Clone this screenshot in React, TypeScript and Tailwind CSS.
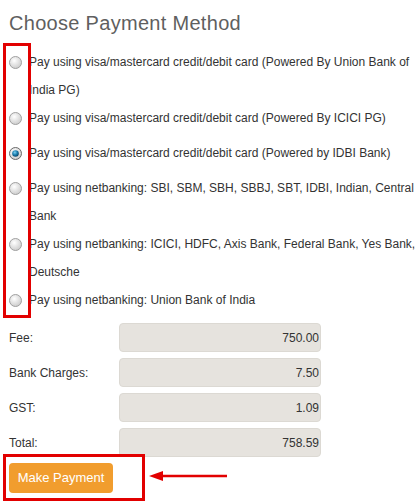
import React from "react";

const options = [
  "Pay using visa/mastercard credit/debit card (Powered By Union Bank of India PG)",
  "Pay using visa/mastercard credit/debit card (Powered By ICICI PG)",
  "Pay using visa/mastercard credit/debit card (Powered by IDBI Bank)",
  "Pay using netbanking: SBI, SBM, SBH, SBBJ, SBT, IDBI, Indian, Central Bank",
  "Pay using netbanking: ICICI, HDFC, Axis Bank, Federal Bank, Yes Bank, Deutsche",
  "Pay using netbanking: Union Bank of India",
];

const fees = [
  ["Fee:", "750.00"],
  ["Bank Charges:", "7.50"],
  ["GST:", "1.09"],
  ["Total:", "758.59"],
];

function Radio({ checked }: { checked: boolean }) {
  return (
    <svg width="13" height="13" viewBox="0 0 13 13" className="shrink-0">
      <defs>
        <radialGradient id={checked ? "rc" : "ru"} cx="0.4" cy="0.35" r="0.7">
          <stop offset="0" stopColor="#ffffff" />
          <stop offset="1" stopColor="#c9c9c9" />
        </radialGradient>
        <radialGradient id="blue" cx="0.4" cy="0.35" r="0.7">
          <stop offset="0" stopColor="#7fd0f0" />
          <stop offset="0.5" stopColor="#1a7fb0" />
          <stop offset="1" stopColor="#0a3d5c" />
        </radialGradient>
      </defs>
      <circle cx="6.5" cy="6.5" r="6" fill={checked ? "url(#rc)" : "url(#ru)"} stroke={checked ? "#6a6a6a" : "#a0a0a0"} strokeWidth="1" />
      {checked && <circle cx="6.5" cy="6.5" r="3.3" fill="url(#blue)" />}
    </svg>
  );
}

export default function App() {
  return (
    <div
      className="relative w-[420px] h-[504px] bg-white overflow-hidden"
      style={{ fontFamily: '"Liberation Sans", Arial, sans-serif' }}
    >
      <div className="pl-[9px] pt-[10px]">
        <h1 className="text-[20px] leading-[26px] text-[#5f5f5f] tracking-[0.3px]">Choose Payment Method</h1>
        <div className="mt-[12px] flex flex-col">
          {options.map((o, i) => (
            <div key={i} className="flex items-start min-h-[35px]">
              <div className="w-[20px] h-[28px] flex items-center">
                <Radio checked={i === 2} />
              </div>
              <div className="w-[390px] text-[12px] leading-[28px] text-[#333]">{o}</div>
            </div>
          ))}
        </div>
        <div className="mt-[2px] flex flex-col gap-[6px]">
          {fees.map(([l, v]) => (
            <div key={l} className="flex items-center">
              <div className="w-[110px] text-[12px] text-[#333]">{l}</div>
              <div className="w-[202px] h-[29px] rounded-[4px] bg-[#e6e3de] border border-[#dcd9d3] flex items-center justify-end pr-[1px] text-[12px] text-[#333]">
                {v}
              </div>
            </div>
          ))}
        </div>
        <div className="mt-[6px] flex">
          <button className="w-[104px] h-[30px] rounded-[4px] bg-[#f19d2e] text-white text-[13px]">Make Payment</button>
        </div>
      </div>

      {/* annotations */}
      <div className="absolute left-[3px] top-[43px] w-[28px] h-[275px] border-[3px] border-[#e20000]" />
      <div className="absolute left-[3px] top-[454px] w-[142px] h-[47px] border-[3px] border-[#e20000]" />
      <svg className="absolute left-[146px] top-[468px]" width="84" height="16" viewBox="0 0 84 16">
        <line x1="12" y1="8" x2="81" y2="8" stroke="#e20000" strokeWidth="2.5" />
        <polygon points="3,8 17,3 17,13" fill="#e20000" />
      </svg>
    </div>
  );
}
